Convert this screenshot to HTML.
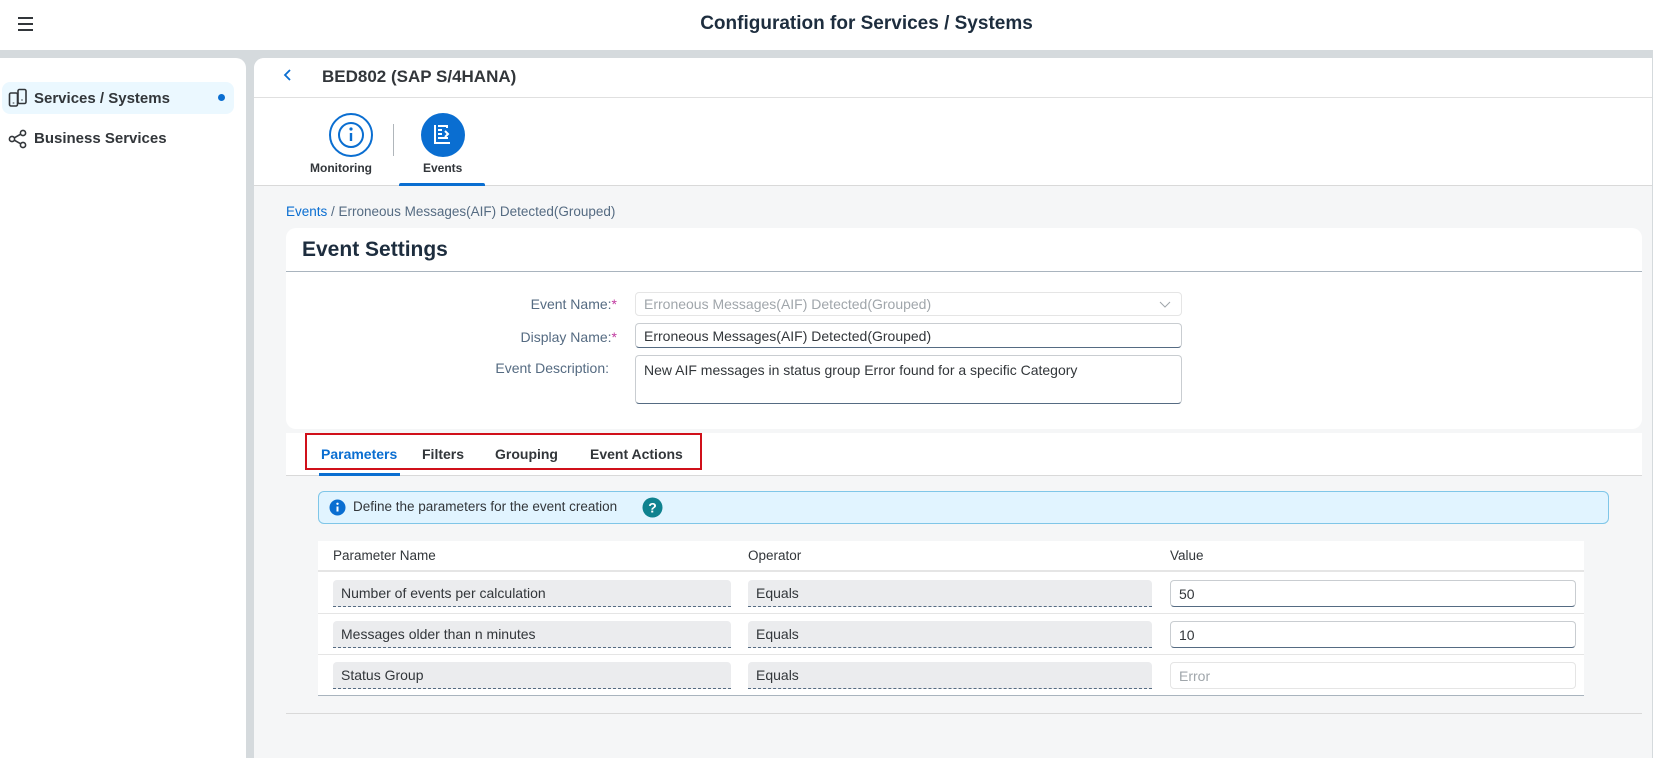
<!DOCTYPE html>
<html><head><meta charset="utf-8"><style>
*{box-sizing:border-box;margin:0;padding:0}
body{width:1653px;height:724px;overflow:hidden;background:#d5dadd;font-family:"Liberation Sans",sans-serif;color:#32363a;position:relative;font-size:14px}
.abs{position:absolute}
.top{left:0;top:0;width:1653px;height:50px;background:#fff}
.left{left:0;top:58px;width:246px;height:700px;background:#fff;border-radius:0 10px 0 0}
.main{left:254px;top:58px;width:1398px;height:700px;background:#f5f6f7;border-radius:10px 0 0 0;overflow:hidden}
.inp{position:absolute;background:#fff;border:1px solid #c9cdd1;border-bottom-color:#556b82;border-radius:4px;font-size:14px;padding-left:8px;display:flex;align-items:center}
.ro{background:#ebecee;border:none;border-bottom:1px dashed #556b82;border-radius:4px 4px 0 0;color:#32363a}
.lbl{position:absolute;color:#556b82;font-size:14px;text-align:right}
</style></head><body>
<div class="abs top">
 <svg class="abs" style="left:17px;top:16px" width="18" height="16"><path d="M1 2h15M1 8h15M1 14h15" stroke="#32363a" stroke-width="2"/></svg>
 <div class="abs" style="left:0;width:1733px;top:13px;text-align:center;font-size:19px;font-weight:bold;color:#1d2d3e">Configuration for Services / Systems</div>
</div>
<div class="abs left">
 <div class="abs" style="left:2px;top:24px;width:232px;height:32px;background:#ebf8ff;border-radius:8px"></div>
 <svg class="abs" style="left:8px;top:30px" width="20" height="20" viewBox="0 0 20 20" fill="none" stroke="#32363a" stroke-width="1.6"><rect x="1.5" y="5" width="8" height="13" rx="1.5"/><rect x="10" y="1.5" width="8" height="14" rx="1.5"/><path d="M5.5 14.5v1M14 11.5v1"/></svg>
 <div class="abs" style="left:34px;top:32px;font-size:15px;font-weight:bold">Services / Systems</div>
 <div class="abs" style="left:218px;top:36px;width:7px;height:7px;border-radius:50%;background:#0a6ed1"></div>
 <svg class="abs" style="left:8px;top:71px" width="20" height="20" viewBox="0 0 20 20" fill="none" stroke="#32363a" stroke-width="1.6"><circle cx="4" cy="10" r="2.6"/><circle cx="15" cy="4" r="2.6"/><circle cx="15" cy="16" r="2.6"/><path d="M6.3 8.8l6.4-3.6M6.3 11.2l6.4 3.6"/></svg>
 <div class="abs" style="left:34px;top:72px;font-size:15px;font-weight:bold">Business Services</div>
</div>
<div class="abs main">
 <div class="abs" style="left:0;top:0;width:1398px;height:128px;background:#fff;border-bottom:1px solid #d9d9d9"></div>
 <div class="abs" style="left:0;top:39px;width:1398px;height:1px;background:#e0e0e0"></div>
 <svg class="abs" style="left:29px;top:10px" width="10" height="14"><path d="M7 2L2 7l5 5" stroke="#0a6ed1" stroke-width="1.8" fill="none"/></svg>
 <div class="abs" style="left:68px;top:9px;font-size:17px;font-weight:bold;color:#32363a">BED802 (SAP S/4HANA)</div>
 <svg class="abs" style="left:74px;top:54px" width="46" height="46"><circle cx="23" cy="23" r="21" fill="#fff" stroke="#0a6ed1" stroke-width="2"/><circle cx="23" cy="23" r="12" fill="none" stroke="#0a6ed1" stroke-width="2"/><path d="M23 21v8" stroke="#0a6ed1" stroke-width="2.4"/><circle cx="23" cy="17" r="1.6" fill="#0a6ed1"/></svg>
 <div class="abs" style="left:139px;top:66px;width:1px;height:32px;background:#b0b6bb"></div>
 <svg class="abs" style="left:166px;top:54px" width="46" height="46"><circle cx="23" cy="23" r="22" fill="#0a6ed1"/><path d="M15 13v18h15M18 14h9v2M18 18h4M18 22h4M18 26h10M25 19l3 3-3 3" stroke="#fff" stroke-width="2" fill="none"/></svg>
 <div class="abs" style="left:56px;top:103px;font-size:12px;font-weight:bold;color:#32363a">Monitoring</div>
 <div class="abs" style="left:169px;top:103px;font-size:12px;font-weight:bold;color:#32363a">Events</div>
 <div class="abs" style="left:145px;top:125px;width:86px;height:3px;background:#0a6ed1;border-radius:2px 2px 0 0"></div>

 <div class="abs" style="left:32px;top:146px;font-size:13.5px;color:#556b82"><span style="color:#0a6ed1">Events</span> / Erroneous Messages(AIF) Detected(Grouped)</div>
 <div class="abs" style="left:32px;top:170px;width:1356px;height:201px;background:#fff;border-radius:10px"></div>
 <div class="abs" style="left:32px;top:213px;width:1356px;height:1px;background:#a9b4be"></div>
 <div class="abs" style="left:48px;top:180px;font-size:21px;font-weight:bold;color:#1d2d3e">Event Settings</div>
 <div class="lbl" style="left:200px;width:163px;top:238px">Event Name:<span style="color:#c0399f">*</span></div>
 <div class="lbl" style="left:200px;width:163px;top:271px">Display Name:<span style="color:#c0399f">*</span></div>
 <div class="lbl" style="left:200px;width:155px;top:302px">Event Description:</div>
 <div class="inp" style="left:381px;top:234px;width:547px;height:24px;color:#a0a6ab;border-color:#e5e5e5">Erroneous Messages(AIF) Detected(Grouped)<svg class="abs" style="right:10px;top:8px" width="12" height="8"><path d="M1 1l5 5 5-5" stroke="#a0a6ab" fill="none"/></svg></div>
 <div class="inp" style="left:381px;top:265px;width:547px;height:25px">Erroneous Messages(AIF) Detected(Grouped)</div>
 <div class="inp" style="left:381px;top:297px;width:547px;height:49px;align-items:flex-start;padding-top:6px">New AIF messages in status group Error found for a specific Category</div>

 <div class="abs" style="left:32px;top:375px;width:1356px;height:43px;background:#fff;border-bottom:1px solid #d9d9d9"></div>
 <div class="abs" style="left:51px;top:375px;width:397px;height:37px;border:2px solid #d0101a"></div>
 <div class="abs" style="left:67px;top:388px;font-size:14px;font-weight:bold;color:#0a6ed1">Parameters</div>
 <div class="abs" style="left:168px;top:388px;font-size:14px;font-weight:bold">Filters</div>
 <div class="abs" style="left:241px;top:388px;font-size:14px;font-weight:bold">Grouping</div>
 <div class="abs" style="left:336px;top:388px;font-size:14px;font-weight:bold">Event Actions</div>
 <div class="abs" style="left:65px;top:415px;width:81px;height:3px;background:#0a6ed1"></div>

 <div class="abs" style="left:64px;top:433px;width:1291px;height:33px;background:#e1f4ff;border:1px solid #7fc6e8;border-radius:6px"></div>
 <svg class="abs" style="left:75px;top:441px" width="17" height="17"><circle cx="8.5" cy="8.5" r="8" fill="#0a6ed1"/><path d="M8.5 7.5v5" stroke="#fff" stroke-width="2"/><circle cx="8.5" cy="4.8" r="1.2" fill="#fff"/></svg>
 <div class="abs" style="left:99px;top:441px;font-size:13.5px">Define the parameters for the event creation</div>
 <svg class="abs" style="left:388px;top:439px" width="21" height="21"><circle cx="10.5" cy="10.5" r="10" fill="#0f828f"/><text x="10.5" y="15.5" text-anchor="middle" fill="#fff" font-size="14" font-weight="bold" font-family="Liberation Sans">?</text></svg>

 <div class="abs" style="left:64px;top:483px;width:1266px;height:31px;background:#fff;border-bottom:2px solid #e5e5e5"></div>
 <div class="abs" style="left:64px;top:514px;width:1266px;height:124px;background:#fff;border-bottom:1px solid #a9b4be"></div>
 <div class="abs" style="left:64px;top:555px;width:1266px;height:1px;background:#e5e5e5"></div>
 <div class="abs" style="left:64px;top:596px;width:1266px;height:1px;background:#e5e5e5"></div>
 <div class="abs" style="left:79px;top:490px;font-size:13.5px">Parameter Name</div>
 <div class="abs" style="left:494px;top:490px;font-size:13.5px">Operator</div>
 <div class="abs" style="left:916px;top:490px;font-size:13.5px">Value</div>

 <div class="inp ro" style="left:79px;top:522px;width:398px;height:27px">Number of events per calculation</div>
 <div class="inp ro" style="left:494px;top:522px;width:404px;height:27px">Equals</div>
 <div class="inp" style="left:916px;top:522px;width:406px;height:27px">50</div>
 <div class="inp ro" style="left:79px;top:563px;width:398px;height:27px">Messages older than n minutes</div>
 <div class="inp ro" style="left:494px;top:563px;width:404px;height:27px">Equals</div>
 <div class="inp" style="left:916px;top:563px;width:406px;height:27px">10</div>
 <div class="inp ro" style="left:79px;top:604px;width:398px;height:27px">Status Group</div>
 <div class="inp ro" style="left:494px;top:604px;width:404px;height:27px">Equals</div>
 <div class="inp" style="left:916px;top:604px;width:406px;height:27px;color:#a0a6ab;border-color:#e5e5e5">Error</div>
 <div class="abs" style="left:32px;top:655px;width:1356px;height:1px;background:#d9d9d9"></div>
</div>
</body></html>
